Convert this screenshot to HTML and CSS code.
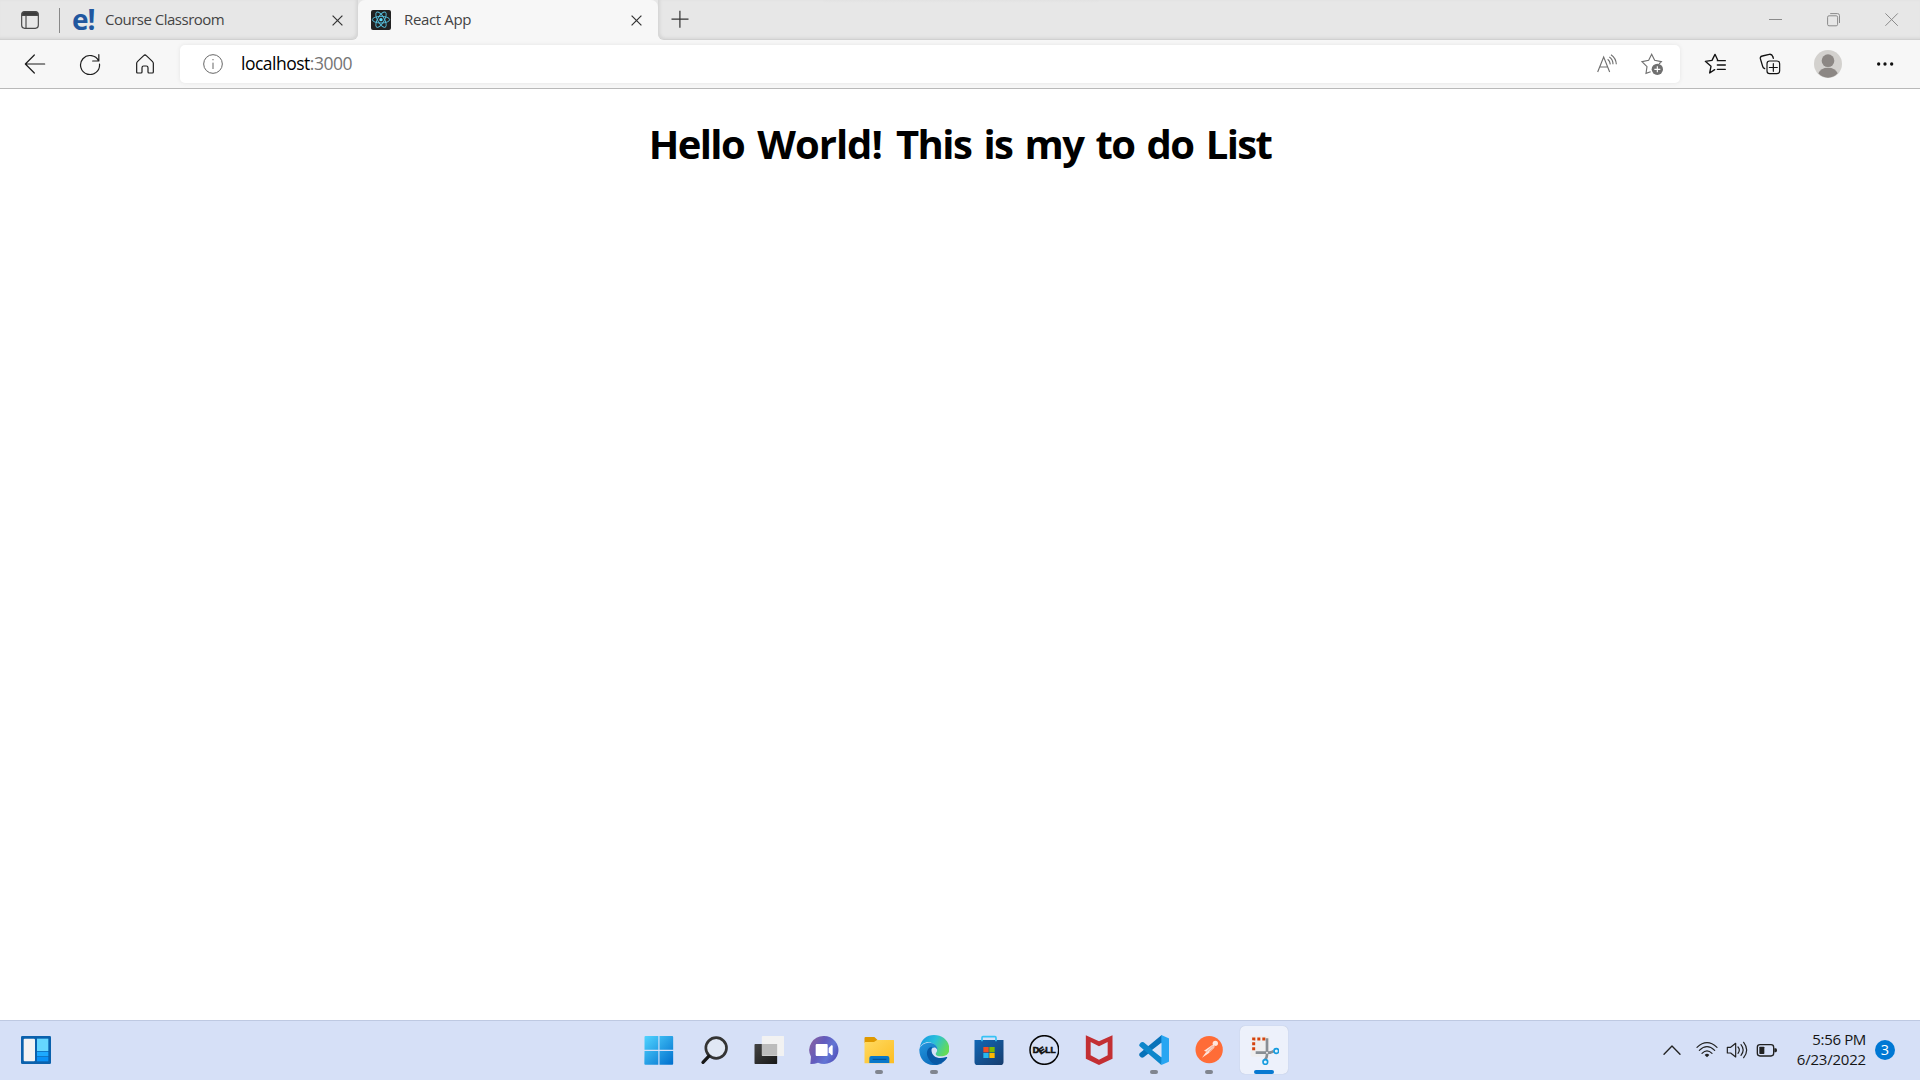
FILE: index.html
```html
<!DOCTYPE html>
<html lang="en">
<head>
<meta charset="utf-8">
<title>React App</title>
<link rel="stylesheet" href="styles.css">
</head>
<body>
<header class="tabs">
  <div class="strip strip-left">
    <svg class="tab-menu" width="18" height="18" viewBox="0 0 54 54" fill="none" stroke="#484848" stroke-width="3.5"><rect x="2" y="2" width="50" height="50" rx="9"/><path d="M4 13V9q0-6 6-6h34q6 0 6 6v4z" fill="#3a3a3a"/><path d="M15 15v36"/></svg>
    <span class="divider"></span>
    <span class="e-logo">e!</span>
    <span class="tab-title course">Course Classroom</span>
    <svg class="close" width="11" height="11" viewBox="0 0 11 11"><path d="M.6.6l9.8 9.8M10.4.6L.6 10.4"/></svg>
  </div>
  <div class="tab-slot">
    <div class="tab">
      <svg width="20" height="20" viewBox="0 0 60 60"><rect width="60" height="60" rx="6" fill="#222"/><g fill="none" stroke="#55bedb" stroke-width="2.8"><ellipse cx="30" cy="29" rx="26" ry="10"/><ellipse cx="30" cy="29" rx="26" ry="10" transform="rotate(60 30 29)"/><ellipse cx="30" cy="29" rx="26" ry="10" transform="rotate(120 30 29)"/></g><circle cx="30" cy="29" r="5" fill="#61dafb"/></svg>
      <span class="tab-title react">React App</span>
      <svg class="close" width="11" height="11" viewBox="0 0 11 11"><path d="M.6.6l9.8 9.8M10.4.6L.6 10.4"/></svg>
    </div>
  </div>
  <div class="strip strip-right">
    <svg width="18" height="18" viewBox="0 0 18 18" stroke="#333" stroke-width="1.2"><path d="M.5 9.2h17M8.900.7v17"/></svg>
    <span class="drag-shade"></span>
    <div class="window-buttons">
      <svg width="14" height="14" viewBox="0 0 14 14"><path d="M0 6.5h13"/></svg>
      <svg width="14" height="14" viewBox="0 0 14 14"><rect x=".6" y="2.8" width="10" height="10" rx="1.4"/><path d="M3.2.6h7.3q2 0 2 2V10"/></svg>
      <svg width="14" height="14" viewBox="0 0 14 14"><path d="M.4.4l12.4 12.4M12.8.4L.4 12.8"/></svg>
    </div>
  </div>
</header>
<nav class="toolbar">
  <div class="nav-buttons">
    <svg viewBox="0 0 66 66"><path d="M62 33H4M31 6L4 33l27 27"/></svg>
    <svg viewBox="0 0 66 66"><path d="M59 24A28.5 28.5 0 1 0 61.5 33M59.500 5v19H41"/></svg>
    <svg viewBox="0 0 66 66"><path d="M8 31Q8 28 11 25L29 8Q33 4 37 8L55 25Q58 28 58 31V57Q58 60 55 60H45Q42 60 42 57V44Q42 39 37 39H29Q24 39 24 44V57Q24 60 21 60H11Q8 60 8 57Z"/></svg>
  </div>
  <div class="address">
    <svg class="info" width="20" height="20" viewBox="0 0 60 60" fill="none" stroke="#666" stroke-width="3"><circle cx="30" cy="30" r="28"/><path d="M30 26v19"/><circle cx="30" cy="17" r="2" fill="#666" stroke="none"/></svg>
    <span class="url">localhost<span class="port">:3000</span></span>
    <svg class="read" width="20" height="20" viewBox="0 0 60 60" fill="none" stroke="#707070" stroke-width="3.4"><path d="M2 54L20 9l18 45M8 39h24M32 16q7 5 8 15M37 9q11 7 11 22M42 2q15 10 16 29"/></svg>
    <svg width="22" height="22" viewBox="0 0 66 66" fill="none" stroke="#707070" stroke-width="3.4"><path d="M29 56L15 61l3-20L3 26l20-4L32 4l9 18 20 4-7 7"/><circle cx="49" cy="49" r="17" fill="#707070" stroke="none"/><path d="M49 40v18M40 49h18" stroke="#fff"/></svg>
  </div>
  <div class="tools">
    <svg width="22" height="22" viewBox="0 0 66 66"><path d="M32 50L17 60l4-20L4 25l20-3L33 4l8 17M40 23h24M40 36h24M40 49h24"/></svg>
    <svg width="22" height="22" viewBox="0 0 66 66"><rect x="24" y="24" width="38" height="38" rx="8" stroke-width="3.5"/><path d="M43 32v23M31 43.500h24" stroke-width="3.500"/><path d="M17 47Q12 45 11 40L4 17Q3 10 10 9L31 4Q39 3 41 10L43 16"/></svg>
    <svg width="28" height="28" viewBox="0 0 84 84"><circle cx="42" cy="42" r="42" fill="#d3d1ce" stroke="none"/><circle cx="42" cy="32" r="19" fill="#8c8784" stroke="none"/><path d="M13 70Q20 53 42 53T71 70Q59 83 42 83T13 70z" fill="#8c8784" stroke="none"/></svg>
    <svg width="18" height="6" viewBox="0 0 54 18"><g fill="#111" stroke="none"><circle cx="8" cy="9" r="5"/><circle cx="27" cy="9" r="5"/><circle cx="47" cy="9" r="5"/></g></svg>
  </div>
</nav>
<main class="page"><h1>Hello <span class="loose">World!</span> This is my to do List</h1></main>
<footer class="taskbar">
  <svg class="widgets" width="30" height="28" viewBox="0 0 90 84"><rect width="90" height="84" rx="4" fill="#0a61ad"/><rect x="8" y="8" width="34" height="68" rx="3" fill="#f3f3f3"/><path d="M48 8h34v37H48z" fill="#66d7ff"/><path d="M48 47h34v14H48z" fill="#1daaff"/><path d="M48 63h34v13H48z" fill="#0991f6"/></svg>
  <div class="apps">
    <div class="app"><svg viewBox="0 0 90 90"><defs><linearGradient id="win" gradientUnits="userSpaceOnUse" x1="2" y1="3" x2="87" y2="89"><stop stop-color="#50d3ff"/><stop offset="1" stop-color="#006fcd"/></linearGradient></defs><path fill="url(#win)" d="M4 3h39v41H1.500V6q0-3 3-3zM46.500 3h38q3 0 3 3v38h-41zM1.500 48H43v41H4q-3 0-3-3zM46.500 48h41v38q0 3-3 3h-38z"/></svg></div>
    <div class="app"><svg viewBox="0 0 90 90"><circle cx="51.500" cy="39" r="31" fill="#e1e8f4" stroke="#343434" stroke-width="8"/><path d="M29 64L12 82" stroke="#181818" stroke-width="10" stroke-linecap="round"/></svg></div>
    <div class="app"><svg viewBox="0 0 90 90"><defs><linearGradient id="tv" x1="0" y1="0" x2="1" y2="1"><stop stop-color="#444"/><stop offset="1" stop-color="#181818"/></linearGradient></defs><rect x="1.500" y="27" width="68" height="60" rx="2" fill="url(#tv)"/><rect x="23.500" y="3" width="67" height="60" rx="2" fill="#f2f2f2"/><path d="M24 27h45.500v35H24z" fill="#bcbcbc"/></svg></div>
    <div class="app"><svg viewBox="0 0 90 90"><defs><linearGradient id="chat" x1="0" y1=".1" x2="1" y2=".6"><stop stop-color="#8b619e"/><stop offset=".45" stop-color="#625bbd"/><stop offset=".75" stop-color="#6276d5"/><stop offset="1" stop-color="#5454bd"/></linearGradient></defs><path d="M45 3a43 42 0 1 1-18 80Q15 88 4 87L6 65A43 42 0 0 1 45 3z" fill="url(#chat)"/><rect x="20" y="27" width="36" height="36" rx="3" fill="#fff"/><path d="M59 39l8-8q4-2 4 3v23q0 5-4 3l-8-8z" fill="#fff"/></svg></div>
    <div class="app running"><svg viewBox="0 0 90 90"><defs><linearGradient id="folder" x1="0" y1="0" x2="1" y2="1"><stop stop-color="#ffda62"/><stop offset="1" stop-color="#fdbd21"/></linearGradient></defs><path d="M1.500 9q0-3 3-3H31l9 8v10H1.500z" fill="#df9900"/><path d="M1.500 21H30l9-6h49q3 0 3 3v67H1.500z" fill="url(#folder)"/><path d="M16 84V69q0-6 6-6h48q6 0 6 6v15z" fill="#0878ca"/><path d="M26 73h41" stroke="#034f91" stroke-width="3"/></svg></div>
    <div class="app running"><svg viewBox="0 0 90 90"><defs><linearGradient id="edge-top" x1="0" y1=".1" x2="1" y2=".5"><stop stop-color="#1595e4"/><stop offset=".5" stop-color="#29c0da"/><stop offset="1" stop-color="#65db57"/></linearGradient><linearGradient id="edge-left" x1="0" y1="0" x2=".7" y2="1"><stop stop-color="#2497de"/><stop offset="1" stop-color="#0867b8"/></linearGradient></defs><path d="M2 39C6 13 23 0 45 0 72 0 91 18 91 42c0 17-13 22-25 22-14 0-20-5-13-13 5-12-4-27-24-29C17 21 7 28 2 39z" fill="url(#edge-top)"/><path d="M1 43Q8 23 30 23C46 23 56 34 55 44 43 25 22 54 38 72c10 12 24 16 36 10Q61 92 42 90C18 90 0 70 1 43z" fill="url(#edge-left)"/><path d="M39 35C22 38 20 57 29 71 37 85 48 91 59 87 70 85 79 77 84 69 86 65 83 65 79 67 55 75 31 62 39 35z" fill="#0758a5"/></svg></div>
    <div class="app"><svg viewBox="0 0 90 90"><defs><linearGradient id="store" x1="0" y1="0" x2="1" y2="1"><stop stop-color="#1267b5"/><stop offset="1" stop-color="#173d6e"/></linearGradient></defs><path d="M1.500 15h87v65q0 10-9 10h-69q-9 0-9-10z" fill="url(#store)"/><path d="M24 19V8q0-3 3-3h36q3 0 3 3v11" fill="none" stroke="#37c2f5" stroke-width="5"/><path d="M28 36h16v16H28z" fill="#f25022"/><path d="M46 36h16v16H46z" fill="#7fba00"/><path d="M28 54h16v15H28z" fill="#26b9ee"/><path d="M46 54h16v15H46z" fill="#ffb900"/></svg></div>
    <div class="app"><svg viewBox="0 0 90 90"><circle cx="46" cy="45" r="43" fill="none" stroke="#050505" stroke-width="4.500"/><g class="dell"><text x="11.500" y="55" textLength="19" lengthAdjust="spacingAndGlyphs">D</text><text x="28" y="55" textLength="20" lengthAdjust="spacingAndGlyphs" transform="rotate(-35 38 46)">E</text><text x="49" y="55" textLength="31" lengthAdjust="spacingAndGlyphs">LL</text></g></svg></div>
    <div class="app"><svg viewBox="0 0 90 90"><path d="M5.500 1L45 19 85.500 1v70L45 90 5.500 71z" fill="#c32f33"/><path d="M20 21L45 34 71 21v40L45 74 20 61z" fill="#d8e1f5"/></svg></div>
    <div class="app running"><svg viewBox="0 0 90 90"><path d="M2 63q5 8 12 4L73 20 68 0 2 55q-3 4 0 8z" fill="#0872b9"/><path d="M2 27q5-9 12-5L72 70 67 90 2 34q-3-3 0-7z" fill="#0d86cb"/><path d="M67 0L89 10q2 1 2 4v62q0 3-3 5L67 90z" fill="#28a6f2"/><path d="M39 45L67 67V23z" fill="#d8e3f8"/></svg></div>
    <div class="app running"><svg viewBox="0 0 90 90"><circle cx="45.500" cy="44" r="41" fill="#ff6c37"/><circle cx="64" cy="25" r="8" fill="#ffe5dc"/><path d="M56 29q9 3 4 10L44 55 24 68 37 50 30 47z" fill="#ffe5dc"/><path d="M57 32L37 51M62 32L46 50" stroke="#e58262" stroke-width="2"/></svg></div>
    <div class="app active"><svg viewBox="0 0 90 90"><rect x="5" y="3" width="57" height="62" rx="5" fill="#eeeeef"/><path d="M49 12H14v36" fill="none" stroke="#d5420c" stroke-width="9" stroke-dasharray="9 6"/><path d="M54 10v49q0 9-6 15M20 53h40q8 0 14-5" fill="none" stroke="#888e94" stroke-width="8"/><circle cx="54" cy="53" r="3" fill="#eee"/><g fill="#e8f5fc" stroke="#159bdf" stroke-width="5"><circle cx="49" cy="81" r="7"/><circle cx="82" cy="48" r="7"/></g></svg></div>
  </div>
  <div class="tray">
    <svg viewBox="0 0 72 72"><path d="M12 49L36 24l24 25" stroke-width="4"/></svg>
    <svg viewBox="0 0 72 72"><path d="M6 28q30-28 60 0M13 37q23-22 46 0M21 46q15-15 30 0"/><path d="M29 51q7-7 14 0l-7 7z" fill="#222" stroke="none"/></svg>
    <svg viewBox="0 0 72 72"><path d="M7 28h10l15-12v41L17 45H7zM39 27q8 9 0 19M48 20q13 16 0 32M56 13q18 23 0 46"/></svg>
    <svg viewBox="0 0 72 72"><rect x="7" y="20" width="49" height="34" rx="8" stroke-width="4"/><rect x="13" y="26" width="15" height="22" rx="2" fill="#222" stroke="none"/><path d="M58 31h4q4 0 4 6t-4 6h-4z" fill="#222" stroke="none"/></svg>
  </div>
  <div class="clock"><span class="time">5:56 PM</span><span class="date">6/23/2022</span></div>
  <span class="count">3</span>
</footer>
</body>
</html>
```
FILE: styles.css
```css
* { box-sizing: border-box; }
body {
  display: flex; flex-direction: column;
  width: 1920px; height: 1080px; margin: 0; overflow: hidden;
  background: #fff; color: #000;
  font-family: "Open Sans", "Noto Sans", sans-serif;
}
svg { display: block; flex: none; }
.tabs { display: flex; height: 40px; background: #f7f7f7; }
.strip { display: flex; height: 40px; background: #e7e7e7; border-bottom: 1px solid #d1d1d1; }
.strip-left { width: 358px; padding-left: 21px; border-radius: 0 0 6px 0; box-shadow: inset -2px -1px 3px #d5d5d5; }
.strip-right { flex: 1; padding-left: 13px; border-radius: 0 0 0 6px; box-shadow: inset 2px -1px 3px #d5d5d5; }
.tab-menu { margin-top: 11px; }
.divider { width: 1px; height: 25px; margin: 8px 0 0 20px; background: #888; }
.e-logo { width: 33px; margin: -1px 0 0 12px; color: #21579f; font-size: 28px; font-weight: 700; line-height: 40px; letter-spacing: -1px; }
.tab-title { color: #444; font-size: 15px; line-height: 38px; white-space: nowrap; }
.course { width: 227px; letter-spacing: -.5px; }
.close { margin-top: 15px; fill: none; stroke: #333; stroke-width: 1.2; }
.tab-slot { width: 300px; background: linear-gradient(#e7e7e7 20px, #f7f7f7 20px); }
.tab { display: flex; height: 40px; padding-left: 13px; background: #f7f7f7; border-radius: 7px 7px 0 0; }
.tab > svg:first-child { margin-top: 10px; }
.react { width: 240px; padding-left: 13px; letter-spacing: -.35px; }
.strip-right > svg { margin-top: 10px; }
.drag-shade { width: 276px; height: 3px; margin-left: 134px; background: linear-gradient(#e2e2e2, #e7e7e7); border-radius: 0 0 4px 4px; }
.window-buttons { display: flex; gap: 44px; margin: 13px 21px 0 auto; fill: none; stroke: #8b8b8b; stroke-width: 1; }
.toolbar { display: flex; height: 49px; background: #f7f7f7; border-bottom: 1px solid #b9b9b9; }
.nav-buttons { display: flex; align-items: center; gap: 33px; width: 180px; padding: 0 0 1px 24px; fill: none; stroke: #1d1d1d; stroke-width: 3.6; stroke-linecap: round; stroke-linejoin: round; }
.nav-buttons svg { width: 22px; height: 22px; }
.address { display: flex; align-items: center; width: 1500px; height: 38px; margin-top: 5px; padding: 0 17px 1px 23px; background: #fff; border-radius: 5px; box-shadow: 0 0 4px #e4e4e4; }
.info { margin-right: 18px; }
.url { padding-bottom: 1px; font-size: 17.5px; line-height: 36px; letter-spacing: -.5px; }
.port { color: #757575; }
.read { margin: 0 24px 0 auto; }
.tools { display: flex; align-items: center; gap: 33px; padding-left: 24px; fill: none; stroke: #111; stroke-width: 4; stroke-linejoin: round; stroke-linecap: round; }
.tools svg:nth-child(4) { margin: 0 0 0 1px; }
.page { height: 931px; text-align: center; }
h1 { margin: 27px 0 0; font-size: 40px; line-height: 56px; font-weight: 700; letter-spacing: -1.6px; word-spacing: 3.4px; }
.loose { margin: 0 2px 0 1px; letter-spacing: -1px; }
.taskbar { display: flex; align-items: center; height: 60px; padding: 0 25px 1px 21px; background: #d6e0f7; border-top: 1px solid #bec9e2; }
.widgets { margin-right: 580px; }
.apps { display: flex; }
.app { position: relative; display: flex; align-items: center; justify-content: center; width: 55px; height: 58px; }
.app > svg { width: 30px; height: 30px; z-index: 1; }
.running::after, .active::after { content: ""; position: absolute; bottom: 5px; width: 8px; height: 4px; background: #80858f; border-radius: 2px; }
.active::before { content: ""; position: absolute; width: 48px; height: 48px; background: #edf1fb; border-radius: 5px; box-shadow: 0 0 1px #aab4ca; }
.active::after { width: 20px; background: #0879d1; }
.dell { font: bold 25px "Liberation Sans", sans-serif; fill: #111; stroke: #111; stroke-width: 1.8; }
.tray { display: flex; gap: 6px; margin-left: auto; fill: none; stroke: #222; stroke-width: 3.6; stroke-linejoin: round; stroke-linecap: round; }
.tray svg { width: 24px; height: 24px; }
.tray svg:first-child { margin-right: 5px; }
.clock { display: flex; flex-direction: column; align-items: flex-end; width: 87px; padding-bottom: 3px; color: #151515; font-size: 15px; line-height: 20px; white-space: nowrap; }
.time { letter-spacing: -.35px; }
.date { letter-spacing: -.2px; }
.count { width: 20px; height: 20px; margin-left: 9px; border-radius: 50%; background: #0078d4; color: #fff; font-size: 14.5px; line-height: 20px; text-align: center; }
```
